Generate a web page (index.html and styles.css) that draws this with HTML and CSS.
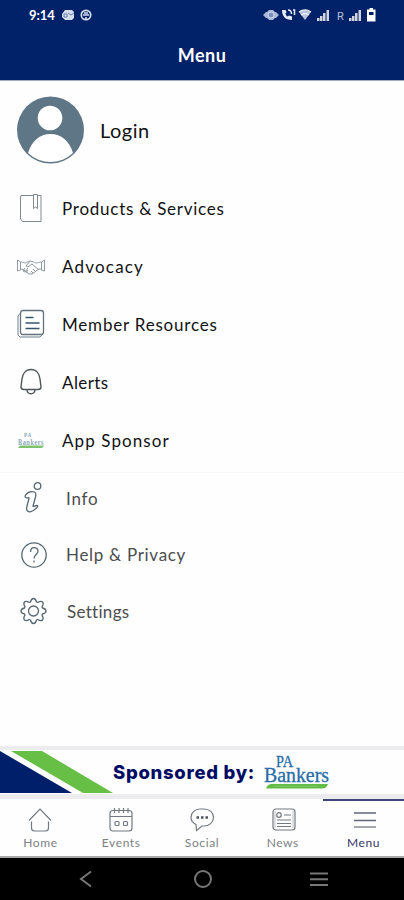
FILE: index.html
```
<!DOCTYPE html>
<html lang="en">
<head>
    <meta charset="UTF-8">
    <meta name="viewport" content="width=device-width, initial-scale=1.0">
    <title>Menu</title>
    <link rel="stylesheet" href="styles.css">
</head>
<body>
    <header>
        <div class="status">
            <span class="time">9:14</span>
            <svg class="status-left" width="32" height="14" viewBox="0 0 32 14">
                <path d="M4 2h7l2 2v6l-2 2H4L1 9V6z" fill="#d5dcec"/>
                <path d="M3 6h3v3H3zM7 5l3 2 3-2" fill="none" stroke="#6d7dab"/>
                <circle cx="25" cy="7" r="4.700" fill="none" stroke="#d5dcec" stroke-width="1.700"/>
                <path d="M22 7h6M23 5h4M25 9v3" stroke="#d5dcec" stroke-width="1.600"/>
            </svg>
            <svg class="status-right" width="116" height="16" viewBox="0 0 116 16">
                <path d="M0 8l3-3h1l2-2h4l2 2h1l3 3-3 3h-1l-2 2H6l-2-2H3z" fill="#a9b8da"/>
                <circle cx="8" cy="8" r="3" fill="#7c90bf" stroke="#d5dcec"/>
                <path d="M19 3c0 6 3 10 10 10v-3.500l-3-1-1.500 1c-1-.5-2-2-2-3L23.500 5l-1-2z" fill="#e6eaf4"/>
                <path d="M25 3c2.500 0 3.500 2 3.500 4M30 3h1.500v5" fill="none" stroke="#e6eaf4" stroke-width="1.500"/>
                <path d="M36 5c4-3 8-3 12 0l-6 8z" fill="#b9c4de"/>
                <path d="M36 5c4-3 8-3 12 0M38 8c3-2 5-2 8 0" fill="none" stroke="#f2f4fa" stroke-width="1.200"/>
                <path d="M43 13l4-4" stroke="#012169" stroke-width="1"/>
                <path d="M54 11h2.500v3H54zM57 9h2.500v5H57zM60 6h2.500v8H60zM63.500 3H66v11h-2.500z" fill="#d0d5df"/>
                <text class="roaming" x="74" y="13">R</text>
                <path d="M86 11h2.500v3H86zM89 9h2.500v5H89zM92 6h2.500v8H92zM95.500 3H98v11h-2.500z" fill="#d0d5df"/>
                <path d="M106.500 1h3.500v1.500h2.500v12H104v-12h2.500z" fill="#fff"/>
                <path d="M106 5h4.500v3H106z" fill="#012169"/>
            </svg>
        </div>
        <h1>Menu</h1>
    </header>

    <main>
        <a class="login">
            <svg width="70" height="70" viewBox="0 0 70 70">
                <circle cx="35.500" cy="35" r="33.500" fill="#5f7687"/>
                <circle cx="35" cy="23" r="12.300" fill="#fff"/>
                <path d="M13 58C16.500 46 25 39 35.500 39s19 7 22.500 19A32.600 32.600 0 0 1 13 58z" fill="#fff"/>
            </svg>
            <span>Login</span>
        </a>
        <ul class="links">
            <li>
                <svg width="30" height="30" viewBox="0 0 30 30" stroke="#818990">
                    <path d="M5 2.500h20v26H6.500L4.500 26V4z"/>
                    <path d="M17.500 1.500h4v14l-2-1.500-2 1.500z" fill="#fff"/>
                </svg>
                <span class="products">Products &amp; Services</span>
            </li>
            <li>
                <svg width="30" height="30" viewBox="0 0 30 30" stroke="#90999e">
                    <path d="M1.500 9v11l3-1V11zM28.500 9v11l-3-1V11zM4.500 11c3 0 4 2 7 0l3-1 3 1c3 2 5 0 8 0M5 18l3 1 5 4h3l7-5h3M14 10l-4 5 2 1 4-3 7 6M9 17l-2 3 2 1 3-4M12 19l-2 3M17 18l3 3M15 20l2 2"/>
                </svg>
                <span class="advocacy">Advocacy</span>
            </li>
            <li>
                <svg width="30" height="30" viewBox="0 0 30 30" stroke="#71818d">
                    <path d="M4 4.500L2 7v19l2 2h20l3-3"/>
                    <rect x="4.500" y="1.500" width="23" height="24" rx="2.500" stroke="#63727e" stroke-width="1.300"/>
                    <path d="M9.500 8.500h8M9.500 14h14M9.500 19.500h14" stroke="#36566e" stroke-width="1.500"/>
                </svg>
                <span class="member">Member Resources</span>
            </li>
            <li>
                <svg width="30" height="30" viewBox="0 0 30 30" stroke="#505658" stroke-width="1.400">
                    <path d="M15 2.500C9.500 2.500 6.500 7 6 12l-1 8c0 1.500 1 2.500 3 2.500h14c2 0 3-1 3-2.500l-1-8c-.5-5-3.500-9.500-9-9.500z"/>
                    <path d="M11 23c.5 5 7.500 5 8 0"/>
                </svg>
                <span class="alerts">Alerts</span>
            </li>
            <li>
                <svg width="30" height="30" viewBox="0 0 30 30">
                    <text class="mini-logo" x="8" y="12" textLength="8" lengthAdjust="spacingAndGlyphs">PA</text>
                    <text class="mini-logo big" x="2" y="20" textLength="26" lengthAdjust="spacingAndGlyphs">Bankers</text>
                    <path d="M4 20.500h24L26 23H2z" fill="#7cc36d" stroke="none"/>
                </svg>
                <span class="sponsor">App Sponsor</span>
            </li>
        </ul>
        <ul class="links extra">
            <li>
                <svg width="30" height="34" viewBox="0 0 30 34" stroke="#566873" stroke-width="1.300">
                    <circle cx="18.500" cy="5" r="3.300"/>
                    <path d="M7 13.500c2-2.500 5-3.500 8.500-2.500 2 1 1.500 3 1 5l-2.500 9c0 1.500 2-.5 4-.5 1.500 0 .5 2-1 3-3 2.500-6.500 4.500-8.500 2.500-1.500-1.500-1-3-.5-5l2-7.500c0-2-2.500.5-3.500-1-.5-1-.5-2 .5-3z"/>
                </svg>
                <span class="info">Info</span>
            </li>
            <li>
                <svg width="30" height="30" viewBox="0 0 30 30" stroke="#566873" stroke-width="1.300">
                    <circle cx="15" cy="15" r="12.200"/>
                    <path d="M11.500 12c0-6 7.500-5.500 7.500-1 0 3.500-4 3.500-4 7.500M15 20.500v2"/>
                </svg>
                <span class="help">Help &amp; Privacy</span>
            </li>
            <li>
                <svg width="30" height="30" viewBox="0 0 30 30" stroke="#566873" stroke-width="1.300" stroke-linejoin="round">
                    <circle cx="14.500" cy="15" r="5"/>
                    <path d="M11.500 6q.8-3.500 3-3.500t3 3.500l1.200.5q3.200-2 4.800-.5t-.5 4.800l.5 1.200q3.500.8 3.500 3t-3.500 3l-.5 1.200q2 3.200.5 4.800t-4.800-.5l-1.200.5q-.8 3.500-3 3.500t-3-3.500l-1.200-.5q-3.200 2-4.800.5t.5-4.800L5.500 18Q2 17.200 2 15t3.500-3l.5-1.200Q4 7.600 5.500 6t4.800.5z"/>
                </svg>
                <span class="settings">Settings</span>
            </li>
        </ul>
    </main>

    <section class="banner">
        <svg class="stripes" width="114" height="44" viewBox="0 0 114 44">
            <path d="M0 1l72 42H0z" fill="#001f6b"/>
            <path d="M11 1h31l71 42H83z" fill="#67bf45"/>
        </svg>
        <strong>Sponsored by:</strong>
        <svg class="pa-logo" width="68" height="38" viewBox="0 0 68 38">
            <text class="logo-text" x="13" y="14" font-size="17" textLength="17" lengthAdjust="spacingAndGlyphs">PA</text>
            <text class="logo-text" x="1" y="28.500" font-size="20" textLength="65" lengthAdjust="spacingAndGlyphs">Bankers</text>
            <path d="M8 31h57c-1 3-3 4.500-6 4.500H3c1-2.500 2-4 5-4.500z" fill="#62bd47"/>
            <path d="M11 33.300h44" stroke="#7fc769" stroke-width="1"/>
        </svg>
    </section>

    <nav>
        <a>
            <svg width="28" height="26" viewBox="0 0 28 26">
                <path d="M3 13.500L14 2l11 11.500M5.500 14.500V21q0 3 3 3h11q3 0 3-3v-6.500"/>
            </svg>
            <span>Home</span>
        </a>
        <a>
            <svg width="28" height="26" viewBox="0 0 28 26">
                <rect x="3" y="3.500" width="22" height="20.500" rx="3"/>
                <path d="M3 9.500h22M7.500 1v5M12 1v5M16.500 1v5M21 1v5"/>
                <rect x="8" y="14.500" width="4" height="4" rx="1"/>
                <rect x="16.500" y="14.500" width="4" height="4" rx="1"/>
            </svg>
            <span>Events</span>
        </a>
        <a>
            <svg width="28" height="26" viewBox="0 0 28 26">
                <path d="M8 17.500C5 16 3 13.500 3 10.500 3 5.500 7 2 12 2h4c5.500 0 9.500 3.500 9.500 8.500S21 19 16 19h-2l-5.500 4.500z"/>
                <path d="M8.500 10.500h2.500M13 10.500h2.500M17.500 10.500H20" stroke="#4c535c" stroke-width="2.300"/>
            </svg>
            <span>Social</span>
        </a>
        <a>
            <svg width="28" height="26" viewBox="0 0 28 26">
                <rect x="4" y="2" width="22" height="21" rx="3"/>
                <path d="M6 4v17M24 4v17" stroke="#c6cbd0"/>
                <circle cx="10" cy="8" r="2.300"/>
                <path d="M15 8h7M8 13h14M8 16.500h14M8 19.500h14"/>
            </svg>
            <span>News</span>
        </a>
        <a class="active">
            <svg width="28" height="26" viewBox="0 0 28 26">
                <path d="M4 6h22M4 13.500h22" stroke="#62667c" stroke-width="1.600"/>
                <path d="M4 20h22" stroke="#9a9da3" stroke-width="1.800"/>
            </svg>
            <span>Menu</span>
        </a>
    </nav>

    <footer>
        <svg width="20" height="20" viewBox="0 0 20 20"><path d="M15 2.500L5 10l10 7.500"/></svg>
        <svg width="20" height="20" viewBox="0 0 20 20"><circle cx="10" cy="10" r="8"/></svg>
        <svg width="20" height="20" viewBox="0 0 20 20"><path d="M1 4.500h18M1 10.300h18M1 16h18"/></svg>
    </footer>
</body>
</html>
```
FILE: styles.css
```
body {
    margin: 0;
    width: 404px;
    height: 900px;
    display: flex;
    flex-direction: column;
    overflow: hidden;
    font-family: Lato, "Liberation Sans", sans-serif;
    background-color: #fefefe;
    color: #111214;
}

svg {
    display: block;
    flex: none;
    overflow: visible;
    fill: none;
}

span, strong {
    white-space: nowrap;
}

header {
    height: 81px;
    flex: none;
    background-color: #012169;
    border-bottom: 1px solid #a7aac4;
    box-sizing: border-box;
    color: #fff;
}

.status {
    height: 30px;
    display: flex;
    align-items: center;
    padding: 0 25px 0 29px;
}

.time {
    font-size: 13px;
    font-weight: bold;
    letter-spacing: -0.1px;
    width: 32px;
}

.status-right {
    margin-left: auto;
}

.roaming {
    font: 11px Roboto, sans-serif;
    fill: #b8c1d8;
}

h1 {
    margin: 0;
    font-size: 18px;
    line-height: 50px;
    letter-spacing: 0.5px;
    text-align: center;
}

main {
    flex: 1;
}

.login {
    height: 98px;
    display: flex;
    align-items: center;
    padding-left: 15px;
    gap: 15px;
    font-size: 20px;
    letter-spacing: 0.5px;
}

ul {
    list-style: none;
    margin: 0;
    padding: 0;
}

.links li {
    height: 58px;
    display: flex;
    align-items: center;
    padding-left: 16px;
    gap: 16px;
    font-size: 17px;
    letter-spacing: 0.8px;
}

.links {
    padding-bottom: 3px;
    border-bottom: 1px solid #f7f7f7;
}

.links .products {
    letter-spacing: 0.75px;
}

.advocacy {
    letter-spacing: 1.2px;
}

.alerts {
    letter-spacing: 0.4px;
}

.sponsor {
    letter-spacing: 1.1px;
}

.links.extra {
    border: 0;
    margin-top: -3px;
}

.extra li {
    height: 56.5px;
    padding-left: 19px;
    gap: 17px;
    color: #4b4d4f;
}

.help {
    letter-spacing: 0.7px;
}

.settings {
    letter-spacing: 0.3px;
    padding-left: 1px;
}

.mini-logo {
    font: bold 7px "Liberation Serif", serif;
    fill: #8ba9bb;
}

.mini-logo.big {
    font-size: 9px;
}

.banner {
    height: 44px;
    flex: none;
    display: flex;
    align-items: center;
    background-color: #fefefe;
    border-top: 4px solid #ececee;
    border-bottom: 5px solid #ececee;
}

.banner strong {
    font: 800 18.5px Inter, "Open Sans", sans-serif;
    letter-spacing: 0.7px;
    color: #000c64;
    margin-left: -1px;
    width: 150px;
}

.logo-text {
    font-family: "Liberation Serif", serif;
    fill: #286da7;
    stroke: #286da7;
    stroke-width: 0.3px;
}

nav {
    height: 57px;
    flex: none;
    display: flex;
    border-bottom: 2px solid #a9a9a9;
}

nav a {
    flex: 1;
    display: flex;
    flex-direction: column;
    align-items: center;
    gap: 1px;
    padding-top: 8px;
    font-size: 12px;
    line-height: 18px;
    letter-spacing: 0.6px;
    color: #7d8085;
}

nav svg {
    stroke: #737981;
    stroke-width: 1.2px;
}

nav .active {
    border-top: 2px solid #414579;
    padding-top: 6px;
    color: #34376a;
}

footer {
    height: 42px;
    flex: none;
    display: flex;
    align-items: center;
    justify-content: space-between;
    padding: 0 75px 0 76px;
    background-color: #000;
}

footer svg {
    stroke: #777;
    stroke-width: 2px;
}
```
